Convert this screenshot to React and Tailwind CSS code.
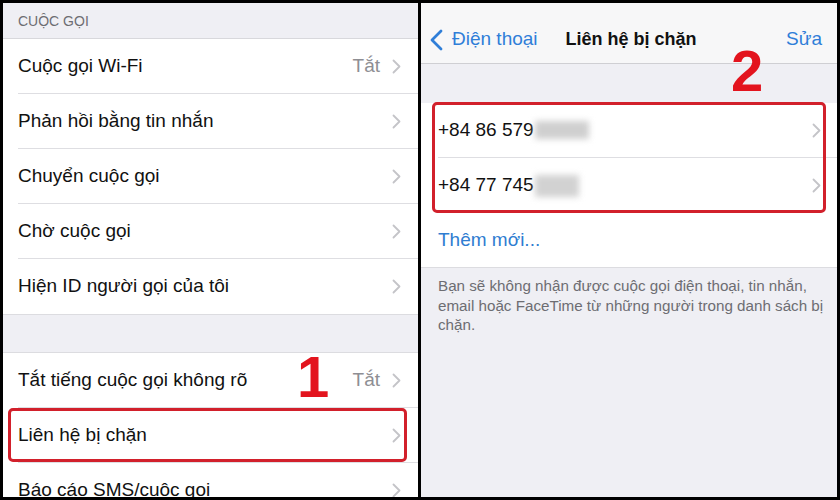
import React from "react";

function Chevron() {
  return (
    <svg width="9" height="15" viewBox="0 0 9 15" className="shrink-0">
      <path d="M1.5 1.5 L7.5 7.5 L1.5 13.5" stroke="#c4c4c8" strokeWidth="1.8" fill="none" strokeLinecap="round" strokeLinejoin="round" />
    </svg>
  );
}

function Row({ label, value, border = true, pr = "pr-[17px]", pl = "pl-[15px]", children }) {
  return (
    <div className={`relative h-[55px] shrink-0 bg-white flex ${pl}`}>
      <div className={`flex-1 flex items-center ${pr} ${border ? "border-b border-[#dedee2]" : ""}`}>
        <span className="flex-1 text-[19px] text-[#111] whitespace-nowrap">{label}</span>
        {value && <span className="text-[19px] text-[#8e8e93] mr-[12px]">{value}</span>}
        <Chevron />
      </div>
      {children}
    </div>
  );
}

export default function App() {
  return (
    <div className="w-[840px] h-[500px] bg-black flex gap-[3px] p-[3px] overflow-hidden font-['Liberation_Sans',Arial,sans-serif]">
      {/* Left panel */}
      <div className="relative w-[415px] h-[494px] bg-[#efeff4] overflow-hidden flex flex-col">
        <div className="h-[36px] shrink-0 flex items-center pl-[15px] pt-[2px] text-[14px] text-[#6d6d72] border-b border-[#d8d8dc]">
          CUỘC GỌI
        </div>
        <Row label="Cuộc gọi Wi-Fi" value="Tắt" />
        <Row label="Phản hồi bằng tin nhắn" />
        <Row label="Chuyển cuộc gọi" />
        <Row label="Chờ cuộc gọi" />
        <Row label="Hiện ID người gọi của tôi" border={false} />
        <div className="h-[39px] shrink-0 border-t border-b border-[#dcdce0]" />
        <Row label="Tắt tiếng cuộc gọi không rõ" value="Tắt" />
        <Row label="Liên hệ bị chặn">
          <div className="absolute left-[5px] right-[11px] top-0 bottom-[1px] border-[3px] border-[#d2202b] rounded-[5px]" />
        </Row>
        <Row label="Báo cáo SMS/cuộc gọi" />
        <div className="absolute left-[294px] top-[345px] text-[58px] leading-none font-bold text-[#e3141e]">1</div>
      </div>

      {/* Right panel */}
      <div className="relative w-[416px] h-[494px] bg-[#efeff4] overflow-hidden flex flex-col">
        <div className="h-[61px] shrink-0 bg-[#f7f7f8] border-b border-[#cfcfd3] flex items-center pt-[13px] relative">
          <div className="flex items-center pl-[9px]">
            <svg width="13" height="22" viewBox="0 0 13 22" className="shrink-0">
              <path d="M11 2 L2 11 L11 20" stroke="#2f7ed8" strokeWidth="2.8" fill="none" strokeLinecap="round" strokeLinejoin="round" />
            </svg>
            <span className="ml-[9px] text-[19px] text-[#2f7ed8]">Điện thoại</span>
          </div>
          <span className="ml-[28px] text-[18px] font-bold text-[#111]">Liên hệ bị chặn</span>
          <span className="ml-auto mr-[15px] text-[19px] text-[#2f7ed8]">Sửa</span>
        </div>
        <div className="h-[39px] shrink-0" />
        <div className="relative shrink-0">
          <Row label={<span className="flex items-center">+84 86 579<span className="inline-block ml-[1px] w-[54px] h-[18px] bg-[#cfcfcf] blur-[3px]" /></span>} pl="pl-[17px]" pr="pr-[16px]" />
          <Row label={<span className="flex items-center">+84 77 745<span className="inline-block ml-[1px] w-[44px] h-[22px] bg-[#d2d2d2] blur-[3px]" /></span>} pl="pl-[17px]" pr="pr-[16px]" border={false} />
          <div className="absolute left-[11px] right-[11px] -top-[1px] bottom-0 border-[3px] border-[#d2202b] rounded-[5px]" />
        </div>
        <div className="h-[55px] shrink-0 bg-white flex items-center pl-[17px] text-[19px] text-[#2f7dd1] border-b border-[#dcdce0]">
          Thêm mới...
        </div>
        <div className="pl-[17px] pt-[8px] text-[15.2px] leading-[19.5px] text-[#6d6d72] whitespace-nowrap">
          Bạn sẽ không nhận được cuộc gọi điện thoại, tin nhắn,
          <br />
          email hoặc FaceTime từ những người trong danh sách bị
          <br />
          chặn.
        </div>
        <div className="absolute left-[310px] top-[39px] text-[58px] leading-none font-bold text-[#e3141e]">2</div>
      </div>
    </div>
  );
}
